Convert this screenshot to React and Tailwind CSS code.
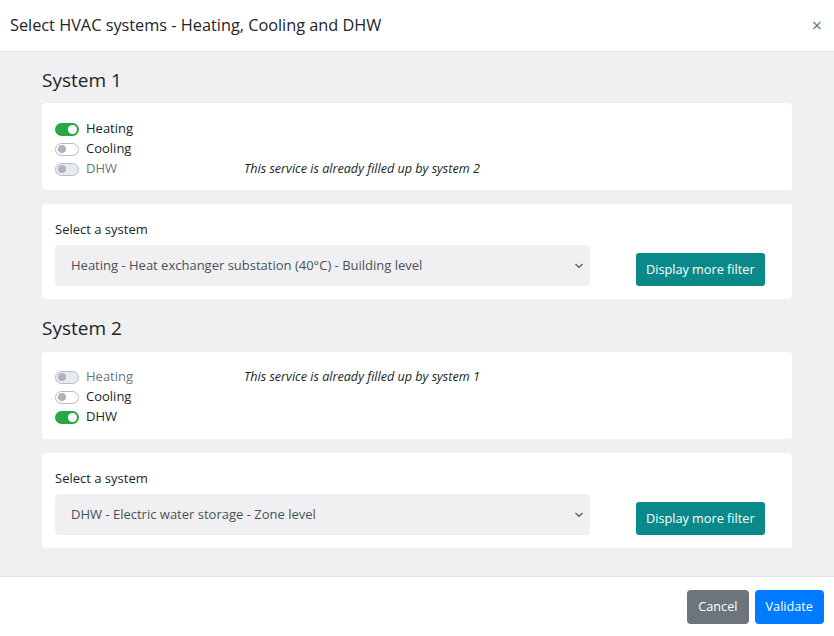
import React from "react";

const font = { fontFamily: '"Open Sans", "Noto Sans", sans-serif' };

function Toggle({ on, disabled, label }) {
  return (
    <div className="flex items-center h-5">
      {on ? (
        <div className="w-[24px] h-[13px] rounded-full bg-[#28a745] flex items-center justify-end pr-[2px]">
          <div className="w-[9px] h-[9px] rounded-full bg-white" />
        </div>
      ) : (
        <div
          className={`w-[24px] h-[13px] rounded-full border border-[#b8bcc2] flex items-center pl-[2px] ${
            disabled ? "bg-[#e9ecef]" : "bg-white"
          }`}
        >
          <div className="w-[8px] h-[8px] rounded-full bg-[#adb5bd]" />
        </div>
      )}
      <span
        className={`ml-[7px] text-[13px] ${disabled ? "text-[#6c757d]" : "text-[#212529]"}`}
      >
        {label}
      </span>
    </div>
  );
}

function SelectCard({ value }) {
  return (
    <div className="bg-white rounded-[4px] mt-[14px] px-[13px] pt-[16px] pb-[13px]">
      <div className="text-[13px] text-[#212529] leading-[18px]">Select a system</div>
      <div className="flex items-end mt-[7px]">
        <div className="w-[535px] h-[41px] bg-[#f0f0f2] rounded-[4px] flex items-center pl-[16px] pr-[6px] justify-between">
          <span className="text-[13px] text-[#495057]">{value}</span>
          <svg width="10" height="8" viewBox="0 0 10 8" fill="none">
            <path d="M1.5 2 L5 5.5 L8.5 2" stroke="#555" strokeWidth="1.2" />
          </svg>
        </div>
        <button className="ml-[46px] h-[33px] px-[10px] bg-[#0a898a] text-white text-[12.7px] rounded-[3px]">
          Display more filter
        </button>
      </div>
    </div>
  );
}

export default function App() {
  return (
    <div className="w-[834px] h-[636px] bg-white flex flex-col" style={font}>
      <div className="h-[52px] flex items-center justify-between px-[10px] border-b border-[#dee2e6] shrink-0">
        <span className="text-[16.3px] text-[#212529]">Select HVAC systems - Heating, Cooling and DHW</span>
        <span className="text-[18px] text-[#6c757d] mr-[2px]">×</span>
      </div>
      <div className="flex-1 bg-[#f0f0f2] px-[42px] pt-[14px]">
        <div className="text-[19px] text-[#212529] leading-[28px] mb-[9px]">System 1</div>
        <div className="bg-white rounded-[4px] px-[13px] pt-[16px] pb-[11px] flex">
          <div className="w-[189px]">
            <Toggle on label="Heating" />
            <Toggle label="Cooling" />
            <Toggle disabled label="DHW" />
          </div>
          <div className="flex flex-col justify-end">
            <div className="h-5 flex items-center text-[12.6px] italic text-[#212529]">
              This service is already filled up by system 2
            </div>
          </div>
        </div>
        <SelectCard value="Heating - Heat exchanger substation (40°C) - Building level" />
        <div className="text-[19px] text-[#212529] leading-[28px] mt-[15px] mb-[10px]">System 2</div>
        <div className="bg-white rounded-[4px] px-[13px] pt-[15px] pb-[12px] flex">
          <div className="w-[189px]">
            <Toggle disabled label="Heating" />
            <Toggle label="Cooling" />
            <Toggle on label="DHW" />
          </div>
          <div className="flex flex-col">
            <div className="h-5 flex items-center text-[12.6px] italic text-[#212529]">
              This service is already filled up by system 1
            </div>
          </div>
        </div>
        <SelectCard value="DHW - Electric water storage - Zone level" />
      </div>
      <div className="h-[60px] border-t border-[#dee2e6] flex items-center justify-end px-[10px] gap-[6px] shrink-0">
        <button className="h-[34px] px-[11px] bg-[#6c757d] text-white text-[12.7px] rounded-[4px]">Cancel</button>
        <button className="h-[34px] px-[11px] bg-[#007bff] text-white text-[12.7px] rounded-[4px]">Validate</button>
      </div>
    </div>
  );
}
